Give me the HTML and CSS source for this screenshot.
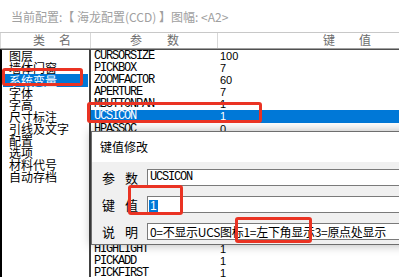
FILE: index.html
```html
<!DOCTYPE html>
<html lang="zh-CN">
<head>
    <meta charset="UTF-8">
    <meta name="viewport" content="width=device-width, initial-scale=1.0">
    <title>系统配置</title>
    <link rel="stylesheet" href="styles.css">
</head>
<body>
    <div class="info">当前配置:【 海龙配置(CCD) 】图幅: &lt;A2&gt;</div>

    <div class="head">
        <div class="head-cell cell-cat">类名</div>
        <div class="head-cell cell-name">参数</div>
        <div class="head-cell cell-value">键值</div>
    </div>

    <div class="panes">
        <ul class="cats">
            <li>图层</li>
            <li>墙体门窗</li>
            <li class="selected">系统变量</li>
            <li>字体</li>
            <li>字高</li>
            <li>尺寸标注</li>
            <li>引线及文字</li>
            <li>配置</li>
            <li>选项</li>
            <li>材料代号</li>
            <li>自动存档</li>
        </ul>

        <div class="vars">
            <div class="var"><span class="var-name">CURSORSIZE</span><span class="var-value">100</span></div>
            <div class="var"><span class="var-name">PICKBOX</span><span class="var-value">7</span></div>
            <div class="var"><span class="var-name">ZOOMFACTOR</span><span class="var-value">60</span></div>
            <div class="var"><span class="var-name">APERTURE</span><span class="var-value">7</span></div>
            <div class="var"><span class="var-name">MBUTTONPAN</span><span class="var-value">1</span></div>
            <div class="var selected"><span class="var-name">UCSICON</span><span class="var-value">1</span></div>
            <div class="var"><span class="var-name">HPASSOC</span><span class="var-value">0</span></div>
            <div class="var"><span class="var-name">GRIPS</span><span class="var-value">1</span></div>
            <div class="var"><span class="var-name">GRIPSIZE</span><span class="var-value">5</span></div>
            <div class="var"><span class="var-name">DRAGMODE</span><span class="var-value">2</span></div>
            <div class="var"><span class="var-name">MIRRTEXT</span><span class="var-value">0</span></div>
            <div class="var"><span class="var-name">SNAPMODE</span><span class="var-value">0</span></div>
            <div class="var"><span class="var-name">ORTHOMODE</span><span class="var-value">0</span></div>
            <div class="var"><span class="var-name">OSMODE</span><span class="var-value">4133</span></div>
            <div class="var"><span class="var-name">LWDISPLAY</span><span class="var-value">0</span></div>
            <div class="var"><span class="var-name">FILEDIA</span><span class="var-value">1</span></div>
            <div class="var"><span class="var-name">HIGHLIGHT</span><span class="var-value">1</span></div>
            <div class="var"><span class="var-name">PICKADD</span><span class="var-value">1</span></div>
            <div class="var"><span class="var-name">PICKFIRST</span><span class="var-value">1</span></div>
            <div class="var"><span class="var-name">PICKAUTO</span><span class="var-value">1</span></div>
        </div>
    </div>

    <!-- 键值修改 dialog, sits over the list -->
    <div class="dialog">
        <div class="dialog-title">键值修改</div>
        <div class="dialog-body">
            <div class="field">
                <label class="field-label">参 数</label>
                <div class="field-box mono">UCSICON</div>
            </div>
            <div class="field">
                <label class="field-label">键 值</label>
                <div class="field-box"><span class="sel">1</span></div>
            </div>
            <div class="field">
                <label class="field-label">说 明</label>
                <div class="field-box desc">0=不显示UCS图标1=左下角显示3=原点处显示</div>
            </div>
        </div>
    </div>

    <!-- red annotation boxes -->
    <div class="mark mark-cat"></div>
    <div class="mark mark-var"></div>
    <div class="mark mark-key"></div>
    <div class="mark mark-desc"></div>
</body>
</html>
```

FILE: styles.css
```css
body {
    font-family: "Noto Sans CJK SC", sans-serif;
    font-size: 12px;
    margin: 0;
    padding: 0;
    width: 399px;
    height: 277px;
    overflow: hidden;
    position: relative;
    background-color: #fff;
    color: #000;
}

.info {
    height: 32px;
    box-sizing: border-box;
    padding: 9px 0 0 11px;
    line-height: 16px;
    color: #a0a0a0;
    white-space: nowrap;
}

.head {
    display: flex;
    height: 15px;
    border-top: 1px solid #c8c8c8;
    border-bottom: 1px solid #a0a0a0;
    color: #6d6d6d;
    line-height: 14px;
    white-space: nowrap;
}

.head-cell {
    box-sizing: border-box;
    border-right: 1px solid #d8d8d8;
}

.cell-cat {
    width: 91px;
    padding-left: 32px;
    letter-spacing: 14px;
    border-left: 1px solid #d8d8d8;
}

.cell-name {
    width: 127px;
    padding-left: 39px;
    letter-spacing: 25px;
}

.cell-value {
    flex: 1;
    padding-left: 105px;
    letter-spacing: 24px;
    border-right: none;
}

.panes {
    display: flex;
    height: 229px;
}

.cats {
    list-style-type: none;
    margin: 0;
    padding: 0;
    width: 89px;
    box-sizing: border-box;
    border-left: 2px solid #000;
    border-top: 1px solid #505050;
}

.cats li {
    height: 12px;
    line-height: 12px;
    padding-left: 7px;
    white-space: nowrap;
}

.cats li.selected {
    margin-left: 1px;
    margin-right: 1px;
    padding-left: 6px;
    background-color: #0078d7;
    color: #fff;
    height: 13px;
    line-height: 13px;
}

.vars {
    flex: 1;
    border-left: 2px solid #404040;
    border-top: 1px solid #505050;
}

.var {
    display: flex;
    height: 12px;
    line-height: 12px;
    padding-left: 3px;
}

.var.selected {
    background-color: #0078d7;
    color: #fff;
    height: 13px;
    line-height: 13px;
}

.var-name, .mono {
    font-family: "Liberation Mono", monospace;
    font-size: 12px;
    letter-spacing: -1.2px;
}

.var-name {
    width: 126px;
}

.var-value {
    font-family: "Liberation Sans", sans-serif;
    font-size: 11px;
}

.dialog {
    position: absolute;
    left: 91px;
    top: 131px;
    width: 340px;
    border: 1px solid #6e6e6e;
    background-color: #f0f0f0;
    box-shadow: 0 0 10px rgba(0, 0, 0, 0.3);
}

.dialog-title {
    height: 30px;
    line-height: 30px;
    padding-left: 8px;
    background-color: #fff;
}

.dialog-body {
    display: flex;
    flex-direction: column;
    gap: 10px;
    padding: 7px 0 4px 10px;
}

.field {
    display: flex;
    align-items: center;
    height: 17px;
}

.field-label {
    flex-shrink: 0;
    width: 36px;
    margin-right: 9px;
    font-size: 13px;
    text-align-last: justify;
    white-space: nowrap;
}

.field-box {
    flex: 1;
    height: 17px;
    box-sizing: border-box;
    border: 1px solid #7a7a7a;
    background-color: #fff;
    padding-left: 2px;
    line-height: 15px;
    white-space: nowrap;
}

.field-box .sel {
    display: inline-block;
    background-color: #0078d7;
    color: #fff;
    font-family: "Liberation Sans", sans-serif;
    padding: 0 1px;
    margin-left: -1px;
    line-height: 13px;
}

.desc {
    letter-spacing: -0.3px;
}

.mark {
    position: absolute;
    box-sizing: border-box;
    border: 3px solid #ea3323;
    border-radius: 3px;
}

.mark-cat {
    left: 2px;
    top: 68px;
    width: 81px;
    height: 18px;
}

.mark-var {
    left: 87px;
    top: 102px;
    width: 175px;
    height: 21px;
}

.mark-key {
    left: 128px;
    top: 185px;
    width: 55px;
    height: 30px;
}

.mark-desc {
    left: 235px;
    top: 217px;
    width: 77px;
    height: 26px;
}
```
